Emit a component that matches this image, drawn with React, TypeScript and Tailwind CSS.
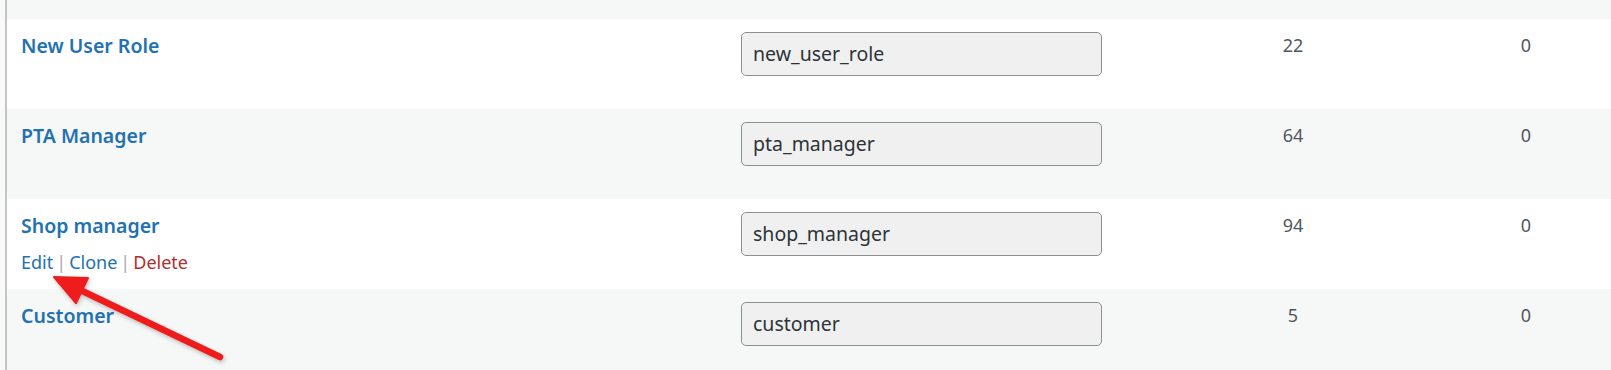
import React from "react";

type Row = { name: string; slug: string; count: string; other: string; actions?: boolean; bg: string };

const rows: Row[] = [
  { name: "New User Role", slug: "new_user_role", count: "22", other: "0", bg: "bg-white" },
  { name: "PTA Manager", slug: "pta_manager", count: "64", other: "0", bg: "bg-[#f6f7f7]" },
  { name: "Shop manager", slug: "shop_manager", count: "94", other: "0", actions: true, bg: "bg-white" },
  { name: "Customer", slug: "customer", count: "5", other: "0", bg: "bg-[#f6f7f7]" },
];

export default function App() {
  return (
    <div
      className="relative w-[1611px] h-[370px] overflow-hidden bg-[#f6f7f7] flex"
      style={{ fontFamily: '"Noto Sans", "Open Sans", sans-serif' }}
    >
      <div className="w-[5px] shrink-0 bg-[#f9f9f9]" />
      <div className="w-[2px] shrink-0 bg-[#c3c4c7]" />
      <div className="flex-1 flex flex-col">
        <div className="h-[19px] shrink-0 bg-[#f6f7f7]" />
        {rows.map((r) => (
          <div
            key={r.slug}
            className={`grid grid-cols-[734px_361px_382px_84px_1fr] h-[90px] shrink-0 ${r.bg}`}
          >
            <div className="pl-[14px] pt-[13px]">
              <div className="text-[19.5px] font-semibold text-[#2271b1] leading-[28px]">{r.name}</div>
              {r.actions && (
                <div className="text-[18px] leading-[26px] mt-[9px] text-[#a7aaad]">
                  <span className="text-[#2271b1]">Edit</span>
                  <span className="mx-[3px]">|</span>
                  <span className="text-[#2271b1]">Clone</span>
                  <span className="mx-[3px]">|</span>
                  <span className="text-[#b32d2e]">Delete</span>
                </div>
              )}
            </div>
            <div className="pt-[13px]">
              <div className="h-[44px] rounded-[5px] border border-[#8c8f94] bg-[#f0f0f1] pl-[11px] flex items-center text-[19.5px] text-[#2c3338]">
                {r.slug}
              </div>
            </div>
            <div className="text-center pt-[13px] text-[18px] leading-[26px] text-[#50575e]">{r.count}</div>
            <div className="text-center pt-[13px] text-[18px] leading-[26px] text-[#50575e]">{r.other}</div>
            <div />
          </div>
        ))}
      </div>
      <svg
        className="absolute left-0 top-0 pointer-events-none"
        width="1611"
        height="370"
        viewBox="0 0 1611 370"
      >
        <defs>
          <filter id="sh" x="-20%" y="-20%" width="140%" height="140%">
            <feDropShadow dx="1" dy="2" stdDeviation="2" floodColor="#000" floodOpacity="0.25" />
          </filter>
        </defs>
        <g filter="url(#sh)">
          <line x1="220" y1="357" x2="74" y2="287" stroke="#ee1c1c" strokeWidth="6.5" strokeLinecap="round" />
          <polygon points="54,277 88,278 76,303" fill="#ee1c1c" stroke="#ee1c1c" strokeWidth="2" strokeLinejoin="round" />
        </g>
      </svg>
    </div>
  );
}
